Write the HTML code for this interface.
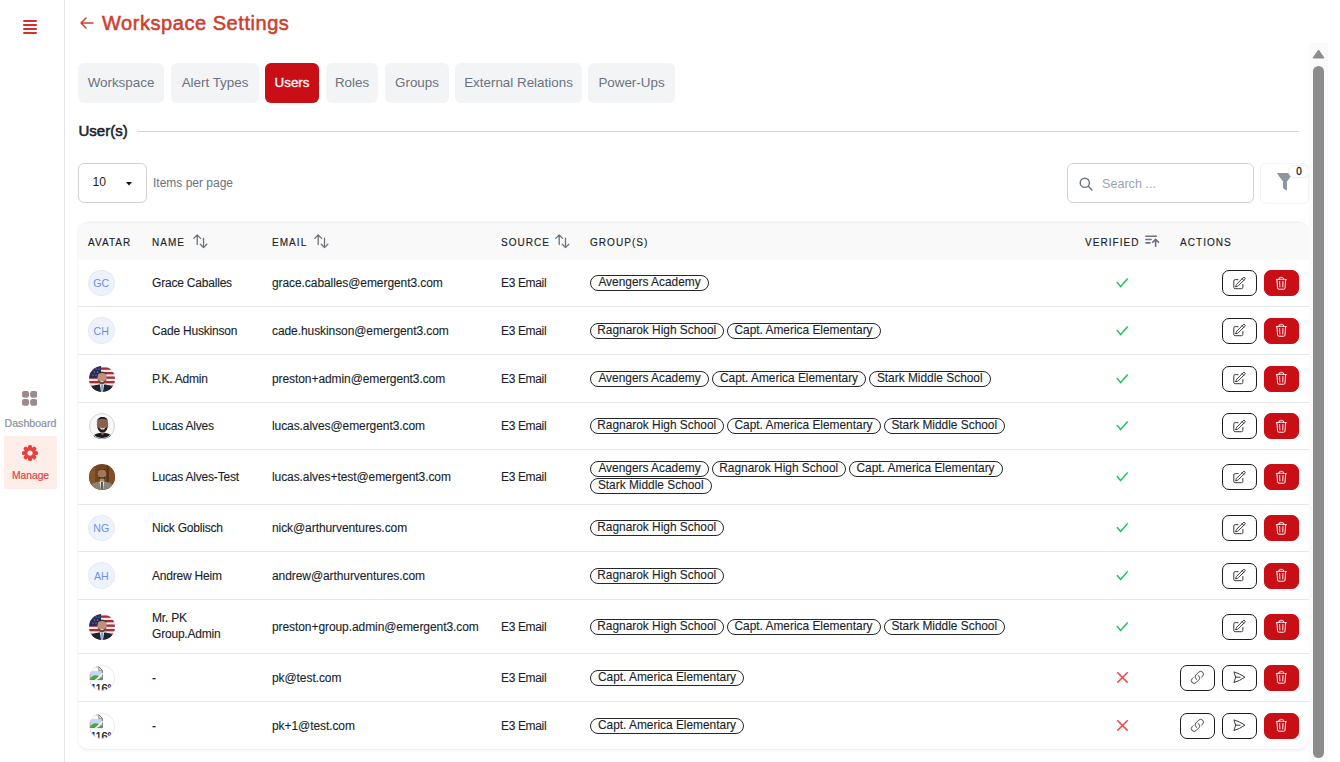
<!DOCTYPE html>
<html><head><meta charset="utf-8">
<style>
*{box-sizing:border-box;margin:0;padding:0}
html,body{width:1340px;height:762px;overflow:hidden;background:#fff}
body{font-family:"Liberation Sans",sans-serif;color:#1f2430;position:relative}
#side{position:absolute;left:0;top:0;width:65px;height:762px;border-right:1px solid #e5e7eb;background:#fff}
.ham{position:absolute;left:23px;width:14px;height:2px;background:#d92d2d;border-radius:1px}
.title{position:absolute;left:79.5px;top:8px;height:30px;line-height:30px;font-size:20px;font-weight:normal;-webkit-text-stroke:0.55px #cf3e2d;color:#cf3e2d;letter-spacing:0.55px;white-space:nowrap}
.tab{position:absolute;top:63px;height:40px;line-height:40px;background:#f3f4f6;border-radius:6px;color:#6b7280;font-size:13.4px;text-align:center;white-space:nowrap}
.tab.on{background:#c90e16;color:#fff;-webkit-text-stroke:0.3px #fff}
.sec{position:absolute;left:78.5px;top:120px;font-size:15px;font-weight:normal;-webkit-text-stroke:0.55px #1b1f2a;line-height:22px;color:#1b1f2a}
.secline{position:absolute;left:137px;top:131px;width:1162px;height:1px;background:#d4d6da}
.sel{position:absolute;left:78px;top:163px;width:69px;height:40px;border:1px solid #d2d2d4;border-radius:6px;font-size:12.2px;line-height:37px;padding-left:13.5px;color:#1b1f2a}
.ipp{position:absolute;left:153px;top:163px;height:40px;line-height:40px;font-size:12px;color:#6b7280}
.search{position:absolute;left:1067px;top:163px;width:187px;height:40px;border:1px solid #d2d2d4;border-radius:6px}
.filter{position:absolute;left:1260px;top:163px;width:49px;height:41px;border:1px solid #f4f4f6;border-radius:6px}
.card{position:absolute;left:78px;top:222px;width:1231px;height:527px;border-radius:10px;background:#fff;box-shadow:0 0 0 1px rgba(20,30,60,0.025),0 2px 4px -1px rgba(0,0,0,0.07);overflow:hidden}
.thead{position:absolute;left:0;top:0;width:100%;height:38px;background:#f9f9f9;border-top:1px solid #eef0f3;border-radius:10px 10px 0 0}
.th{position:absolute;top:1px;height:38px;line-height:38px;font-size:10px;font-weight:normal;-webkit-text-stroke:0.15px #1b1f2a;letter-spacing:1.05px;color:#1b1f2a;white-space:nowrap}
.th svg{position:absolute;top:9.5px}
.row{position:absolute;left:0;width:100%;border-bottom:1px solid #e5e7eb}
.cell{position:absolute;top:0;bottom:0;display:flex;align-items:center;font-size:12px;letter-spacing:-0.2px;-webkit-text-stroke:0.12px #1b1f2a;color:#1b1f2a;white-space:nowrap}
.nm2{white-space:normal;line-height:16.5px;padding-bottom:1px}
.chips{flex-wrap:wrap;align-content:center;row-gap:1px}
.av{width:26.5px;height:26.5px;border-radius:50%;background:#edf3fd;border:1px solid #e4e8ef;color:#6d8cf0;font-size:10.6px;letter-spacing:0;-webkit-text-stroke:0;display:flex;align-items:center;justify-content:center}
.chip{display:inline-flex;justify-content:center;height:16px;line-height:13px;border:1px solid #25272d;border-radius:9px;padding:0;font-size:11.9px;letter-spacing:0;margin-right:3px;color:#1b1f2a}
.btn{position:absolute;top:calc(50% - 13px);width:35px;height:26px;border:1px solid #1c1c1c;border-radius:7px;background:#fff;display:flex;align-items:center;justify-content:center}
.btn.del{background:#c90e16;border-color:#c90e16}
#sb{position:absolute;left:1309px;top:43px;width:19px;height:719px;background:#fafafa}
#sbarrow{position:absolute;left:1312px;top:49px}
#thumb{position:absolute;left:1313px;top:66px;width:11px;height:692px;border-radius:6px;background:#8c8c8c}
</style></head><body>
<svg width="0" height="0" style="position:absolute">
 <defs>
  <symbol id="ic-edit" viewBox="0 0 24 24"><path d="M16.862 4.487l1.687-1.688a1.875 1.875 0 112.652 2.652L10.582 16.07a4.5 4.5 0 01-1.897 1.13L6 18l.8-2.685a4.5 4.5 0 011.13-1.897l8.932-8.931zm0 0L19.5 7.125M18 14v4.75A2.25 2.25 0 0115.75 21H5.25A2.25 2.25 0 013 18.75V8.25A2.25 2.25 0 015.25 6H10" fill="none" stroke="#333" stroke-width="1.6" stroke-linecap="round" stroke-linejoin="round"/></symbol>
  <symbol id="ic-trash" viewBox="0 0 24 24"><path d="M14.74 9l-.346 9m-4.788 0L9.26 9m9.968-3.21c.342.052.682.107 1.022.166m-1.022-.165L18.16 19.673a2.25 2.25 0 01-2.244 2.077H8.084a2.25 2.25 0 01-2.244-2.077L4.772 5.79m14.456 0a48.108 48.108 0 00-3.478-.397m-12 .562c.34-.059.68-.114 1.022-.165m0 0a48.11 48.11 0 013.478-.397m7.5 0v-.916c0-1.18-.91-2.164-2.09-2.201a51.964 51.964 0 00-3.32 0c-1.18.037-2.09 1.022-2.09 2.201v.916m7.5 0a48.667 48.667 0 00-7.5 0" fill="none" stroke="#fff" stroke-width="1.6" stroke-linecap="round" stroke-linejoin="round"/></symbol>
  <symbol id="ic-link" viewBox="0 0 24 24"><path d="M13.19 8.688a4.5 4.5 0 011.242 7.244l-4.5 4.5a4.5 4.5 0 01-6.364-6.364l1.757-1.757m13.35-.622l1.757-1.757a4.5 4.5 0 00-6.364-6.364l-4.5 4.5a4.5 4.5 0 001.242 7.244" fill="none" stroke="#444" stroke-width="1.6" stroke-linecap="round" stroke-linejoin="round"/></symbol>
  <symbol id="ic-send" viewBox="0 0 24 24"><path d="M6 12L3.269 3.126A59.768 59.768 0 0121.485 12 59.77 59.77 0 013.27 20.876L5.999 12zm0 0h7.5" fill="none" stroke="#333" stroke-width="1.6" stroke-linecap="round" stroke-linejoin="round"/></symbol>
  <symbol id="av-flag" viewBox="0 0 26 26"><clipPath id="c1"><circle cx="13" cy="13" r="13"/></clipPath><g clip-path="url(#c1)"><rect width="26" height="26" fill="#efe9e9"/><rect y="1.5" width="26" height="2.3" fill="#a92c38"/><rect y="6" width="26" height="2.3" fill="#a92c38"/><rect y="10.5" width="26" height="2.3" fill="#a92c38"/><rect y="15" width="26" height="2.3" fill="#a92c38"/><rect y="19.5" width="26" height="2.3" fill="#a92c38"/><path d="M0 0h12v12H0z" fill="#262d5a"/><g fill="#c9cce0"><circle cx="4" cy="3" r=".5"/><circle cx="7" cy="3" r=".5"/><circle cx="10" cy="3" r=".5"/><circle cx="5.5" cy="6" r=".5"/><circle cx="8.5" cy="6" r=".5"/><circle cx="4" cy="9" r=".5"/><circle cx="7" cy="9" r=".5"/></g><ellipse cx="13" cy="11.8" rx="4.6" ry="6" fill="#c0907a"/><path d="M8.2 10c-.2-5.4 9.8-5.6 9.6 0l-.7-2c-2.7-1.4-5.6-1.4-8.2 0z" fill="#3a2922"/><path d="M8.6 13c.5 3.8 2.2 5.4 4.4 5.4s3.9-1.6 4.4-5.4c-.9 1.7-2.3 2.4-4.4 2.4s-3.5-.7-4.4-2.4z" fill="#6d4b3b"/><path d="M11 14.8c1.3.7 2.7.7 4 0-.3.9-1 1.3-2 1.3s-1.7-.4-2-1.3z" fill="#f4f0ee"/><path d="M0 26c.6-5.4 4.5-7.4 13-7.4s12.4 2 13 7.4z" fill="#1d222c"/><path d="M10.8 18.2h4.4l-1.2 7.8h-2z" fill="#e6eaee"/><path d="M12.1 18.8h1.8l-.3 7.2h-1.2z" fill="#6a98c8"/></g></symbol>
  <symbol id="av-lucas" viewBox="0 0 26 26"><clipPath id="c2"><circle cx="13" cy="13" r="13"/></clipPath><g clip-path="url(#c2)"><rect width="26" height="26" fill="#f7f7f7"/><ellipse cx="13.5" cy="11.5" rx="5.6" ry="7.3" fill="#8b604c"/><path d="M7.8 9.6c-.6-7.2 11.8-7.6 11.3 0l-.9-2.6c-3.1-1.6-6.3-1.6-9.5 0z" fill="#1b1b1b"/><path d="M8.2 13.5c.8 4.2 2.8 6.2 5.3 6.2s4.5-2 5.3-6.2c-1.1 1.3-2.8 2-5.3 2s-4.2-.7-5.3-2z" fill="#2a1e18"/><path d="M10.8 14.6c1.7 1.1 3.7 1.1 5.4 0-.4 1.4-1.4 2-2.7 2s-2.3-.6-2.7-2z" fill="#fff"/><path d="M3 26c.8-4.2 4-6 10.5-6s9.7 1.8 10.5 6z" fill="#14181c"/><path d="M11 19.6l2.5 3 2.5-3z" fill="#8b604c"/></g><circle cx="13" cy="13" r="12.5" fill="none" stroke="#d6d7db" stroke-width="1"/></symbol>
  <symbol id="av-brown" viewBox="0 0 26 26"><clipPath id="c3"><circle cx="13" cy="13" r="13"/></clipPath><g clip-path="url(#c3)"><rect width="26" height="26" fill="#74441f"/><rect x="0" width="6" height="26" fill="#87552c"/><rect x="17.5" width="2.5" height="26" fill="#5a3417"/><rect x="20" width="6" height="26" fill="#80502a"/><ellipse cx="13" cy="9.6" rx="4.2" ry="5.6" fill="#a37858"/><path d="M8.8 8c-.1-4.6 8.5-4.8 8.4 0l-.6-1.6c-2.4-1.2-4.8-1.2-7.2 0z" fill="#2a1d16"/><path d="M9.4 12.2c.6 2.4 2 3.6 3.6 3.6s3-1.2 3.6-3.6c-.9 1-2.1 1.4-3.6 1.4s-2.7-.4-3.6-1.4z" fill="#2a1f1a"/><path d="M10.8 14.5h4.4v3.5h-4.4z" fill="#b08a68"/><path d="M0 26c.6-5.8 4.8-8.6 13-8.6s12.4 2.8 13 8.6z" fill="#8d8178"/><path d="M10.6 17.4h4.8l-1.4 8.6h-2z" fill="#e9e5e2"/><path d="M12.2 18h1.6l-.1 8h-1.4z" fill="#2d3827"/></g></symbol>
  <symbol id="av-broken" viewBox="0 0 26 26"><clipPath id="c4"><circle cx="13" cy="13" r="12.7"/></clipPath><g clip-path="url(#c4)"><rect width="26" height="26" fill="#fff"/><path d="M0.8 6h12.6v8.6H0.8z" fill="#c6d6f2"/><path d="M0.8 14.6C2.5 10.2 7.5 9.2 10.2 11.6L7.4 14.6z" fill="#4fa63c"/><path d="M9.6 14.6l2.6-2.6 1.2 1.2v1.4z" fill="#4fa63c"/><path d="M0.8 14.6V1.8h9l3.6 3.6v9.2h-5" fill="none" stroke="#6b6b6b" stroke-width="0.9"/><path d="M9.8 1.8v3.6h3.6" fill="none" stroke="#6b6b6b" stroke-width="0.8"/><path d="M0.8 14.6h5.6" fill="none" stroke="#6b6b6b" stroke-width="0.9"/><path d="M6.6 15.2l7.2-6.8" stroke="#fff" stroke-width="1.3"/><text x="-1.2" y="26.6" font-family="Liberation Sans" font-size="10.8" fill="#111" stroke="#111" stroke-width="0.25">\116°</text></g><circle cx="13" cy="13" r="12.6" fill="none" stroke="#e3e5ea" stroke-width="0.8"/></symbol>
 </defs>
</svg>
<div id="side">
  <div class="ham" style="top:20px"></div>
  <div class="ham" style="top:24px"></div>
  <div class="ham" style="top:28px"></div>
  <div class="ham" style="top:32px"></div>
  <svg style="position:absolute;left:22.3px;top:391.3px" width="15.2" height="14.8" viewBox="0 0 15.2 14.8"><g fill="#9d8b8b"><rect x="0" y="0" width="7" height="6.8" rx="2.2"/><rect x="8.2" y="0" width="7" height="6.8" rx="2.2"/><rect x="0" y="8" width="7" height="6.8" rx="2.2"/><rect x="8.2" y="8" width="7" height="6.8" rx="2.2"/></g></svg>
  <div style="position:absolute;left:0;top:414.5px;width:61px;text-align:center;font-size:10.6px;-webkit-text-stroke:0.2px #8a8f9b;line-height:16px;color:#8a8f9b">Dashboard</div>
  <div style="position:absolute;left:4px;top:436px;width:53px;height:53px;background:#fdeeea;border-radius:2px"></div>
  <svg style="position:absolute;left:22px;top:445px" width="16" height="16" viewBox="0 0 16 16"><g fill="#e8403f"><circle cx="8" cy="8" r="6"/><g id="tooth"><rect x="6" y="0" width="4" height="4" rx="1.5"/></g><use href="#tooth" transform="rotate(45 8 8)"/><use href="#tooth" transform="rotate(90 8 8)"/><use href="#tooth" transform="rotate(135 8 8)"/><use href="#tooth" transform="rotate(180 8 8)"/><use href="#tooth" transform="rotate(225 8 8)"/><use href="#tooth" transform="rotate(270 8 8)"/><use href="#tooth" transform="rotate(315 8 8)"/></g><circle cx="8" cy="8" r="2.6" fill="#fdeeea"/></svg>
  <div style="position:absolute;left:0;top:468px;width:61px;text-align:center;font-size:10.3px;-webkit-text-stroke:0.2px #e8403f;line-height:16px;color:#e8403f">Manage</div>
</div>
<svg style="position:absolute;left:79px;top:16px" width="15" height="14" viewBox="0 0 15 14"><path d="M14 7H2M7 2L2 7l5 5" fill="none" stroke="#cf3e2d" stroke-width="1.5" stroke-linecap="round" stroke-linejoin="round"/></svg>
<div class="title" style="left:102px">Workspace Settings</div>
<div class="tab" style="left:78px;width:86px">Workspace</div>
<div class="tab" style="left:171px;width:88px">Alert Types</div>
<div class="tab on" style="left:265px;width:54px">Users</div>
<div class="tab" style="left:326px;width:52px">Roles</div>
<div class="tab" style="left:385px;width:64px">Groups</div>
<div class="tab" style="left:455px;width:127px">External Relations</div>
<div class="tab" style="left:588px;width:87px">Power-Ups</div>
<div class="sec">User(s)</div>
<div class="secline"></div>
<div class="sel">10<svg style="position:absolute;left:47px;top:18px" width="6" height="4" viewBox="0 0 6 4"><path d="M0 0h6L3 3.5z" fill="#111"/></svg></div>
<div class="ipp">Items per page</div>
<div class="search"><svg style="position:absolute;left:11px;top:13px" width="14" height="14" viewBox="0 0 14 14"><g fill="none" stroke="#6b7280" stroke-width="1.4" stroke-linecap="round"><circle cx="5.8" cy="5.8" r="4.6"/><path d="M9.3 9.3l3.6 3.6"/></g></svg><div style="position:absolute;left:34px;top:1px;line-height:38px;font-size:12.6px;color:#9ca3af">Search ...</div></div>
<div class="filter"><svg style="position:absolute;left:16px;top:9px" width="16" height="18" viewBox="0 0 16 18"><path d="M0.5 0.5h15L9.5 8.5V17L6.5 15V8.5z" fill="#8e96a3" stroke="#8e96a3" stroke-linejoin="round"/></svg><div style="position:absolute;left:27px;top:1px;width:22px;height:13px;border-radius:7px;background:#fff;border:1px solid #eceef1;font-size:10px;line-height:11px;text-align:center;color:#222;-webkit-text-stroke:0.3px #222">0</div></div>
<div class="card">
  <div class="thead">
    <div class="th" style="left:10px">AVATAR</div>
    <div class="th" style="left:74px">NAME<svg style="left:40px;top:9px" width="16" height="16"><use href="#ic-sort"/></svg></div>
    <div class="th" style="left:194px">EMAIL<svg style="left:41px;top:9px" width="16" height="16"><use href="#ic-sort"/></svg></div>
    <div class="th" style="left:423px">SOURCE<svg style="left:53px;top:9px" width="16" height="16"><use href="#ic-sort"/></svg></div>
    <div class="th" style="left:512px">GROUP(S)</div>
    <div class="th" style="left:1007px">VERIFIED<svg style="left:59px;top:9px" width="16" height="14"><use href="#ic-sortasc"/></svg></div>
    <div class="th" style="left:1102px">ACTIONS</div>
  </div>
<div class="row" style="top:38px;height:47px">
  <div class="cell" style="left:10px"><div class="av">GC</div></div>
  <div class="cell" style="left:74px">Grace Caballes</div>
  <div class="cell" style="left:194px;letter-spacing:-0.08px">grace.caballes@emergent3.com</div>
  <div class="cell" style="left:423px;letter-spacing:-0.35px">E3 Email</div>
  <div class="cell chips" style="left:512px;width:430px"><span class="chip" style="width:119px">Avengers Academy</span></div>
  <div class="cell" style="left:1037px"><svg width="14" height="14" viewBox="0 0 14 14"><path d="M2.3 6.6L5.6 10.6 12.2 2.9" fill="none" stroke="#22c55e" stroke-width="1.5" stroke-linecap="round" stroke-linejoin="round"/></svg></div>
  <div class="btns" style="position:absolute;left:0;top:0;height:100%"><div class="btn" style="left:1144px"><svg width="14.5" height="14.5"><use href="#ic-edit"/></svg></div><div class="btn del" style="left:1186px"><svg width="14.6" height="14.6"><use href="#ic-trash"/></svg></div></div>
</div>
<div class="row" style="top:85px;height:48px">
  <div class="cell" style="left:10px"><div class="av">CH</div></div>
  <div class="cell" style="left:74px">Cade Huskinson</div>
  <div class="cell" style="left:194px;letter-spacing:-0.08px">cade.huskinson@emergent3.com</div>
  <div class="cell" style="left:423px;letter-spacing:-0.35px">E3 Email</div>
  <div class="cell chips" style="left:512px;width:430px"><span class="chip" style="width:133.5px">Ragnarok High School</span><span class="chip" style="width:154px">Capt. America Elementary</span></div>
  <div class="cell" style="left:1037px"><svg width="14" height="14" viewBox="0 0 14 14"><path d="M2.3 6.6L5.6 10.6 12.2 2.9" fill="none" stroke="#22c55e" stroke-width="1.5" stroke-linecap="round" stroke-linejoin="round"/></svg></div>
  <div class="btns" style="position:absolute;left:0;top:0;height:100%"><div class="btn" style="left:1144px"><svg width="14.5" height="14.5"><use href="#ic-edit"/></svg></div><div class="btn del" style="left:1186px"><svg width="14.6" height="14.6"><use href="#ic-trash"/></svg></div></div>
</div>
<div class="row" style="top:133px;height:48px">
  <div class="cell" style="left:10.6px"><svg class="ph" width="26" height="26" viewBox="0 0 26 26"><use href="#av-flag"/></svg></div>
  <div class="cell" style="left:74px">P.K. Admin</div>
  <div class="cell" style="left:194px;letter-spacing:-0.08px">preston+admin@emergent3.com</div>
  <div class="cell" style="left:423px;letter-spacing:-0.35px">E3 Email</div>
  <div class="cell chips" style="left:512px;width:430px"><span class="chip" style="width:119px">Avengers Academy</span><span class="chip" style="width:154px">Capt. America Elementary</span><span class="chip" style="width:121.5px">Stark Middle School</span></div>
  <div class="cell" style="left:1037px"><svg width="14" height="14" viewBox="0 0 14 14"><path d="M2.3 6.6L5.6 10.6 12.2 2.9" fill="none" stroke="#22c55e" stroke-width="1.5" stroke-linecap="round" stroke-linejoin="round"/></svg></div>
  <div class="btns" style="position:absolute;left:0;top:0;height:100%"><div class="btn" style="left:1144px"><svg width="14.5" height="14.5"><use href="#ic-edit"/></svg></div><div class="btn del" style="left:1186px"><svg width="14.6" height="14.6"><use href="#ic-trash"/></svg></div></div>
</div>
<div class="row" style="top:181px;height:47px">
  <div class="cell" style="left:10.6px"><svg class="ph" width="26" height="26" viewBox="0 0 26 26"><use href="#av-lucas"/></svg></div>
  <div class="cell" style="left:74px">Lucas Alves</div>
  <div class="cell" style="left:194px;letter-spacing:-0.08px">lucas.alves@emergent3.com</div>
  <div class="cell" style="left:423px;letter-spacing:-0.35px">E3 Email</div>
  <div class="cell chips" style="left:512px;width:430px"><span class="chip" style="width:133.5px">Ragnarok High School</span><span class="chip" style="width:154px">Capt. America Elementary</span><span class="chip" style="width:121.5px">Stark Middle School</span></div>
  <div class="cell" style="left:1037px"><svg width="14" height="14" viewBox="0 0 14 14"><path d="M2.3 6.6L5.6 10.6 12.2 2.9" fill="none" stroke="#22c55e" stroke-width="1.5" stroke-linecap="round" stroke-linejoin="round"/></svg></div>
  <div class="btns" style="position:absolute;left:0;top:0;height:100%"><div class="btn" style="left:1144px"><svg width="14.5" height="14.5"><use href="#ic-edit"/></svg></div><div class="btn del" style="left:1186px"><svg width="14.6" height="14.6"><use href="#ic-trash"/></svg></div></div>
</div>
<div class="row" style="top:228px;height:55px">
  <div class="cell" style="left:10.6px"><svg class="ph" width="26" height="26" viewBox="0 0 26 26"><use href="#av-brown"/></svg></div>
  <div class="cell" style="left:74px">Lucas Alves-Test</div>
  <div class="cell" style="left:194px;letter-spacing:-0.08px">lucas.alves+test@emergent3.com</div>
  <div class="cell" style="left:423px;letter-spacing:-0.35px">E3 Email</div>
  <div class="cell chips" style="left:512px;width:430px"><span class="chip" style="width:119px">Avengers Academy</span><span class="chip" style="width:133.5px">Ragnarok High School</span><span class="chip" style="width:154px">Capt. America Elementary</span><span class="chip" style="width:121.5px">Stark Middle School</span></div>
  <div class="cell" style="left:1037px"><svg width="14" height="14" viewBox="0 0 14 14"><path d="M2.3 6.6L5.6 10.6 12.2 2.9" fill="none" stroke="#22c55e" stroke-width="1.5" stroke-linecap="round" stroke-linejoin="round"/></svg></div>
  <div class="btns" style="position:absolute;left:0;top:0;height:100%"><div class="btn" style="left:1144px"><svg width="14.5" height="14.5"><use href="#ic-edit"/></svg></div><div class="btn del" style="left:1186px"><svg width="14.6" height="14.6"><use href="#ic-trash"/></svg></div></div>
</div>
<div class="row" style="top:283px;height:47px">
  <div class="cell" style="left:10px"><div class="av">NG</div></div>
  <div class="cell" style="left:74px">Nick Goblisch</div>
  <div class="cell" style="left:194px;letter-spacing:-0.08px">nick@arthurventures.com</div>
  <div class="cell" style="left:423px;letter-spacing:-0.35px"></div>
  <div class="cell chips" style="left:512px;width:430px"><span class="chip" style="width:133.5px">Ragnarok High School</span></div>
  <div class="cell" style="left:1037px"><svg width="14" height="14" viewBox="0 0 14 14"><path d="M2.3 6.6L5.6 10.6 12.2 2.9" fill="none" stroke="#22c55e" stroke-width="1.5" stroke-linecap="round" stroke-linejoin="round"/></svg></div>
  <div class="btns" style="position:absolute;left:0;top:0;height:100%"><div class="btn" style="left:1144px"><svg width="14.5" height="14.5"><use href="#ic-edit"/></svg></div><div class="btn del" style="left:1186px"><svg width="14.6" height="14.6"><use href="#ic-trash"/></svg></div></div>
</div>
<div class="row" style="top:330px;height:48px">
  <div class="cell" style="left:10px"><div class="av">AH</div></div>
  <div class="cell" style="left:74px">Andrew Heim</div>
  <div class="cell" style="left:194px;letter-spacing:-0.08px">andrew@arthurventures.com</div>
  <div class="cell" style="left:423px;letter-spacing:-0.35px"></div>
  <div class="cell chips" style="left:512px;width:430px"><span class="chip" style="width:133.5px">Ragnarok High School</span></div>
  <div class="cell" style="left:1037px"><svg width="14" height="14" viewBox="0 0 14 14"><path d="M2.3 6.6L5.6 10.6 12.2 2.9" fill="none" stroke="#22c55e" stroke-width="1.5" stroke-linecap="round" stroke-linejoin="round"/></svg></div>
  <div class="btns" style="position:absolute;left:0;top:0;height:100%"><div class="btn" style="left:1144px"><svg width="14.5" height="14.5"><use href="#ic-edit"/></svg></div><div class="btn del" style="left:1186px"><svg width="14.6" height="14.6"><use href="#ic-trash"/></svg></div></div>
</div>
<div class="row" style="top:378px;height:54px">
  <div class="cell" style="left:10.6px"><svg class="ph" width="26" height="26" viewBox="0 0 26 26"><use href="#av-flag"/></svg></div>
  <div class="cell nm2" style="left:74px">Mr. PK<br>Group.Admin</div>
  <div class="cell" style="left:194px;letter-spacing:-0.08px">preston+group.admin@emergent3.com</div>
  <div class="cell" style="left:423px;letter-spacing:-0.35px">E3 Email</div>
  <div class="cell chips" style="left:512px;width:430px"><span class="chip" style="width:133.5px">Ragnarok High School</span><span class="chip" style="width:154px">Capt. America Elementary</span><span class="chip" style="width:121.5px">Stark Middle School</span></div>
  <div class="cell" style="left:1037px"><svg width="14" height="14" viewBox="0 0 14 14"><path d="M2.3 6.6L5.6 10.6 12.2 2.9" fill="none" stroke="#22c55e" stroke-width="1.5" stroke-linecap="round" stroke-linejoin="round"/></svg></div>
  <div class="btns" style="position:absolute;left:0;top:0;height:100%"><div class="btn" style="left:1144px"><svg width="14.5" height="14.5"><use href="#ic-edit"/></svg></div><div class="btn del" style="left:1186px"><svg width="14.6" height="14.6"><use href="#ic-trash"/></svg></div></div>
</div>
<div class="row" style="top:432px;height:48px">
  <div class="cell" style="left:10.5px"><svg class="ph" width="26" height="26" viewBox="0 0 26 26"><use href="#av-broken"/></svg></div>
  <div class="cell" style="left:74px">-</div>
  <div class="cell" style="left:194px;letter-spacing:-0.08px">pk@test.com</div>
  <div class="cell" style="left:423px;letter-spacing:-0.35px">E3 Email</div>
  <div class="cell chips" style="left:512px;width:430px"><span class="chip" style="width:154px">Capt. America Elementary</span></div>
  <div class="cell" style="left:1035px"><svg width="19" height="19" viewBox="0 0 24 24"><path d="M6 18L18 6M6 6l12 12" fill="none" stroke="#ef4444" stroke-width="2" stroke-linecap="round" stroke-linejoin="round"/></svg></div>
  <div class="btns" style="position:absolute;left:0;top:0;height:100%"><div class="btn" style="left:1102px"><svg width="14.8" height="14.8"><use href="#ic-link"/></svg></div><div class="btn" style="left:1144px"><svg width="14.4" height="14.4"><use href="#ic-send"/></svg></div><div class="btn del" style="left:1186px"><svg width="14.6" height="14.6"><use href="#ic-trash"/></svg></div></div>
</div>
<div class="row" style="top:480px;height:47px;border-bottom:none">
  <div class="cell" style="left:10.5px"><svg class="ph" width="26" height="26" viewBox="0 0 26 26"><use href="#av-broken"/></svg></div>
  <div class="cell" style="left:74px">-</div>
  <div class="cell" style="left:194px;letter-spacing:-0.08px">pk+1@test.com</div>
  <div class="cell" style="left:423px;letter-spacing:-0.35px">E3 Email</div>
  <div class="cell chips" style="left:512px;width:430px"><span class="chip" style="width:154px">Capt. America Elementary</span></div>
  <div class="cell" style="left:1035px"><svg width="19" height="19" viewBox="0 0 24 24"><path d="M6 18L18 6M6 6l12 12" fill="none" stroke="#ef4444" stroke-width="2" stroke-linecap="round" stroke-linejoin="round"/></svg></div>
  <div class="btns" style="position:absolute;left:0;top:0;height:100%"><div class="btn" style="left:1102px"><svg width="14.8" height="14.8"><use href="#ic-link"/></svg></div><div class="btn" style="left:1144px"><svg width="14.4" height="14.4"><use href="#ic-send"/></svg></div><div class="btn del" style="left:1186px"><svg width="14.6" height="14.6"><use href="#ic-trash"/></svg></div></div>
</div>
</div>
<svg width="0" height="0" style="position:absolute"><defs>
  <symbol id="ic-sort" viewBox="0 0 16 16"><path d="M5.2 1.9v9.7M1.8 5.4l3.4-3.5 3.4 3.5M11.5 5.1v9.5M8.3 11.3l3.2 3.3 3.3-3.3" fill="none" stroke="#6b7280" stroke-width="1.3" stroke-linecap="round" stroke-linejoin="round"/></symbol>
  <symbol id="ic-sortasc" viewBox="0 0 16 14"><path d="M1.9 3.2h10.4M1.9 6.5h5.2M2 9.9h4M11.6 13.5V6.5M8.7 9.3l2.9-2.9 2.9 2.9" fill="none" stroke="#6b7280" stroke-width="1.6" stroke-linecap="round" stroke-linejoin="round"/></symbol>
</defs></svg>
<div id="sb"></div>
<svg id="sbarrow" width="13" height="10" viewBox="0 0 13 10"><path d="M6.5 1L12 9H1z" fill="#8c8c8c" stroke="#8c8c8c" stroke-linejoin="round"/></svg>
<div id="thumb"></div>
</body></html>
